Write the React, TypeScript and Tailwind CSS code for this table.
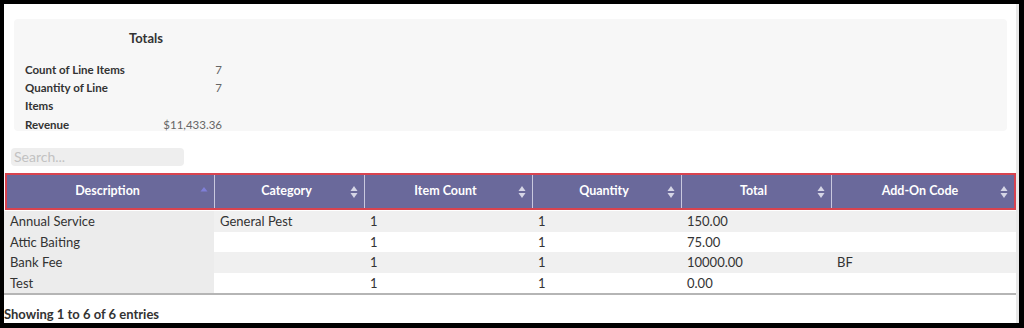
import { ReactNode } from "react";

const font = { fontFamily: "Lato, 'Open Sans', sans-serif" };

const columns = ["Description", "Category", "Item Count", "Quantity", "Total", "Add-On Code"];

const rows = [
  ["Annual Service", "General Pest", "1", "1", "150.00", ""],
  ["Attic Baiting", "", "1", "1", "75.00", ""],
  ["Bank Fee", "", "1", "1", "10000.00", "BF"],
  ["Test", "", "1", "1", "0.00", ""],
];

function SortIcon({ active }: { active?: boolean }) {
  if (active) {
    return (
      <svg width="8" height="12" viewBox="0 0 8 12" className="shrink-0">
        <path d="M4 1 L7.5 5.5 L0.5 5.5 Z" fill="#7f7fd8" />
      </svg>
    );
  }
  return (
    <svg width="8" height="14" viewBox="0 0 8 14" className="shrink-0">
      <path d="M4 1 L7.5 6 L0.5 6 Z" fill="#d6d6e6" />
      <path d="M4 13 L7.5 8 L0.5 8 Z" fill="#d6d6e6" />
    </svg>
  );
}

function TotalRow({ label, value, className }: { label: ReactNode; value: string; className?: string }) {
  return (
    <div className={`flex leading-[18px] ${className ?? ""}`}>
      <div className="w-[110px] font-bold text-[#333]">{label}</div>
      <div className="w-[87px] text-right text-[#666] self-start">{value}</div>
    </div>
  );
}

export default function App() {
  return (
    <div className="h-[328px] w-[1024px] bg-black pl-[4px] pt-[4px] pr-[5px] pb-[5px]" style={font}>
      <div className="h-full bg-white border-r-[3px] border-[#e8e8e8] flex flex-col">
        {/* Totals panel */}
        <div className="ml-[10px] mr-[9px] mt-[15px] h-[112px] overflow-hidden rounded-sm bg-[#f7f7f7] pl-[11px] pt-[10px] text-[11.5px]">
          <div className="w-[242px] text-center text-[13px] font-bold leading-[18px] text-[#333]">Totals</div>
          <div className="mt-[14px]">
            <TotalRow label="Count of Line Items" value="7" />
            <TotalRow label={<>Quantity of Line<br />Items</>} value="7" />
            <TotalRow label="Revenue" value="$11,433.36" className="mt-[1px]" />
          </div>
        </div>

        {/* Search */}
        <div className="ml-[7px] mt-[17px] h-[18px] w-[173px] rounded-sm bg-[#eeeeee] px-[3px] text-[14px] leading-[18px] text-[#c2c2c2]">
          Search...
        </div>

        {/* Table header */}
        <div className="ml-[1px] mt-[7px] grid h-[37px] grid-cols-[207px_150px_168px_149px_150px_1fr] border-2 border-[#d8434f] bg-[#6a699b] text-[12.5px] font-bold text-white">
          {columns.map((c, i) => (
            <div
              key={c}
              className={`flex items-center pl-[8px] pr-[6px] ${i > 0 ? "border-l border-[#c9c8de]" : ""}`}
            >
              <span className="flex-1 text-center">{c}</span>
              <SortIcon active={i === 0} />
            </div>
          ))}
        </div>

        {/* Table body */}
        <div className="mt-[1px] border-b-2 border-[#b5b5b5] text-[13px] text-[#333]">
          {rows.map((r, ri) => (
            <div
              key={ri}
              className={`grid h-[20.5px] grid-cols-[210px_150px_168px_149px_150px_1fr] leading-[20px] ${
                ri % 2 === 0 ? "bg-[#f0f0f0]" : "bg-white"
              }`}
            >
              {r.map((cell, ci) => (
                <div key={ci} className={`px-[6px] ${ci === 0 ? "bg-[#ececec]" : ""}`}>
                  {cell}
                </div>
              ))}
            </div>
          ))}
        </div>

        <div className="mt-[11px] text-[13px] font-bold leading-[16px] text-[#333]">Showing 1 to 6 of 6 entries</div>
      </div>
    </div>
  );
}
